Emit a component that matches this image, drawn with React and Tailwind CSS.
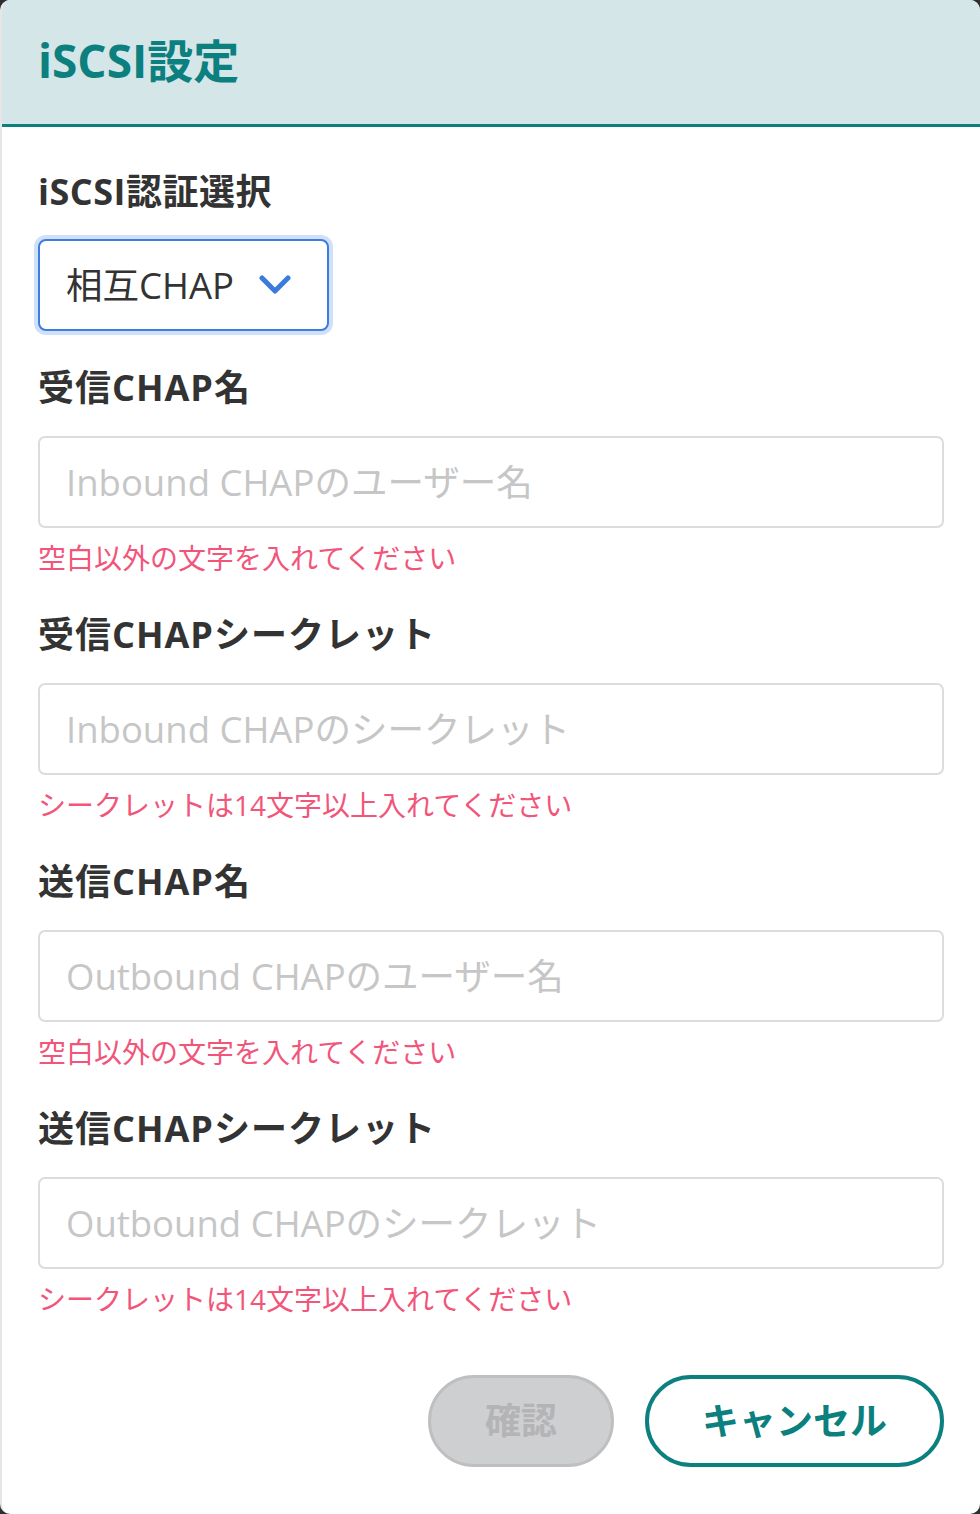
import React, { useState } from "react";

const fontStack = {
  fontFamily: '"Open Sans", "Noto Sans CJK JP", sans-serif',
};

const fields = [
  {
    label: "受信CHAP名",
    placeholder: "Inbound CHAPのユーザー名",
    error: "空白以外の文字を入れてください",
  },
  {
    label: "受信CHAPシークレット",
    placeholder: "Inbound CHAPのシークレット",
    error: "シークレットは14文字以上入れてください",
  },
  {
    label: "送信CHAP名",
    placeholder: "Outbound CHAPのユーザー名",
    error: "空白以外の文字を入れてください",
  },
  {
    label: "送信CHAPシークレット",
    placeholder: "Outbound CHAPのシークレット",
    error: "シークレットは14文字以上入れてください",
  },
];

const Field = ({ label, placeholder, error }) => {
  const [value, setValue] = useState("");
  return (
    <div className="flex flex-col">
      <label className="text-[36px] leading-[48px] font-bold text-[#333] tracking-[1px] mb-[24px]">
        {label}
      </label>
      <input
        type="text"
        value={value}
        onChange={(e) => setValue(e.target.value)}
        placeholder={placeholder}
        className="h-[92px] w-full rounded-[7px] border-2 border-[#dcdcdc] bg-white px-[26px] text-[36.5px] text-[#333] placeholder:text-[#c6c6c6] outline-none"
      />
      <p className="mt-[10px] text-[28px] leading-[40px] text-[#f2557a]">{error}</p>
    </div>
  );
};

const App = () => {
  return (
    <div className="min-h-[1514px] w-[980px] bg-[#2e2e2e]" style={fontStack}>
      <div className="flex min-h-[1514px] flex-col overflow-hidden rounded-[10px] border-l-2 border-[#e6e6e6] bg-white">
        {/* Header */}
        <header className="flex h-[127px] items-center border-b-[3px] border-[#0c7f7f] bg-[#d4e6e8] px-[36px]">
          <h1 className="text-[46px] font-bold text-[#0c7f7f] pb-[4px]">iSCSI設定</h1>
        </header>

        {/* Body */}
        <div className="flex flex-col px-[36px] pt-[41px]">
          <label className="text-[36px] leading-[48px] font-bold text-[#333] tracking-[0.5px]">
            iSCSI認証選択
          </label>
          <div className="mt-[23px] mb-[33px]">
            <button className="flex h-[92px] w-[291px] items-center justify-between rounded-[8px] border-2 border-[#3d7ce0] bg-white pl-[26px] pr-[36px] ring-4 ring-[#cfe0f8]">
              <span className="text-[36.5px] text-[#333]">相互CHAP</span>
              <svg width="32" height="22" viewBox="0 0 32 22" fill="none">
                <polyline
                  points="3,4 16,17 29,4"
                  stroke="#3b7be0"
                  strokeWidth="5"
                  strokeLinecap="round"
                  strokeLinejoin="round"
                />
              </svg>
            </button>
          </div>

          <div className="flex flex-col gap-[33px]">
            {fields.map((f) => (
              <Field key={f.label} {...f} />
            ))}
          </div>

          {/* Buttons */}
          <div className="mt-[56px] flex justify-end gap-[31px] pb-[47px]">
            <button
              disabled
              className="h-[92px] w-[186px] rounded-full border-[3px] border-[#bfbfc1] bg-[#cecfd1] text-[36px] font-bold text-[#b4b4b7]"
            >
              確認
            </button>
            <button className="h-[92px] w-[299px] rounded-full border-[4px] border-[#0c7f7f] bg-white text-[37px] font-bold text-[#0c7f7f]">
              キャンセル
            </button>
          </div>
        </div>
      </div>
    </div>
  );
};

export default App;
